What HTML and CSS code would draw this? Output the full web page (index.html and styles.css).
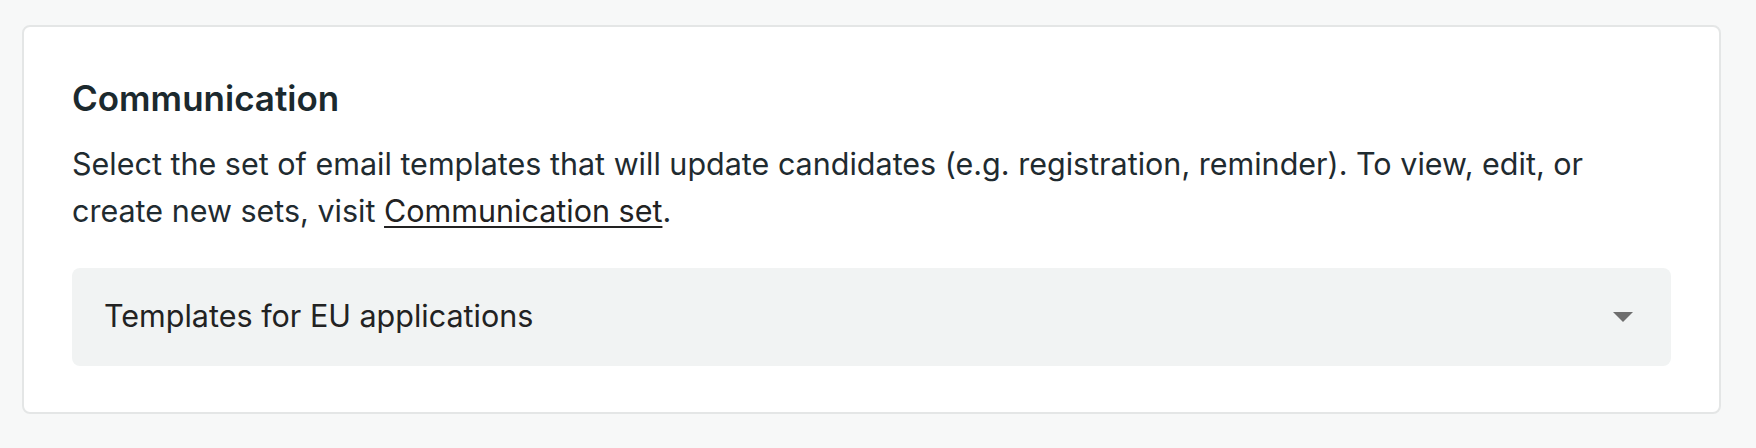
FILE: index.html
```html
<!DOCTYPE html>
<html lang="en">
<head>
<meta charset="utf-8">
<title>Communication</title>
<link rel="stylesheet" href="styles.css">
</head>
<body>
<div class="page">
  <section class="card">
    <h2 class="card-title">Communication</h2>
    <p class="card-desc">Select the set of email templates that will update candidates (e.g. registration, reminder). To view, edit, or create new sets, visit <a class="link" href="#">Communication set</a>.</p>
    <div class="select">
      <span class="select-value">Templates for EU applications</span>
      <svg class="select-arrow" width="20" height="10" viewBox="0 0 20 10" aria-hidden="true"><path d="M0 0H20L10 10Z" fill="#6e6e6e"/></svg>
    </div>
  </section>
</div>
</body>
</html>
```

FILE: styles.css
```css
html, body {
  margin: 0;
  padding: 0;
  background: #f7f8f8;
}
body {
  font-family: Inter, "Noto Sans", "Liberation Sans", sans-serif;
  color: #1d2a2f;
}
.page {
  padding: 25px 35px 0 22px;
}
.card {
  background: #ffffff;
  border: 2px solid #e4e6e6;
  border-radius: 8px;
  padding: 51px 48px 46px 48px;
}
.card-title {
  margin: 0;
  font-size: 35px;
  font-weight: 600;
  line-height: 41px;
  color: #1b292e;
}
.card-desc {
  margin: 21px 0 0 0;
  font-size: 30.5px;
  line-height: 47px;
  color: #1f2b30;
}
.link {
  color: #222;
  text-decoration: underline;
  text-decoration-thickness: 2px;
  text-underline-offset: 4px;
}
.select {
  margin-top: 34px;
  height: 98px;
  box-sizing: border-box;
  background: #f1f3f3;
  border-radius: 8px;
  display: flex;
  align-items: center;
  justify-content: space-between;
  padding: 0 38px 3px 32px;
}
.select-value {
  font-size: 30.5px;
  color: #222;
}
.select-arrow {
  display: block;
  margin-top: 3px;
}
```
